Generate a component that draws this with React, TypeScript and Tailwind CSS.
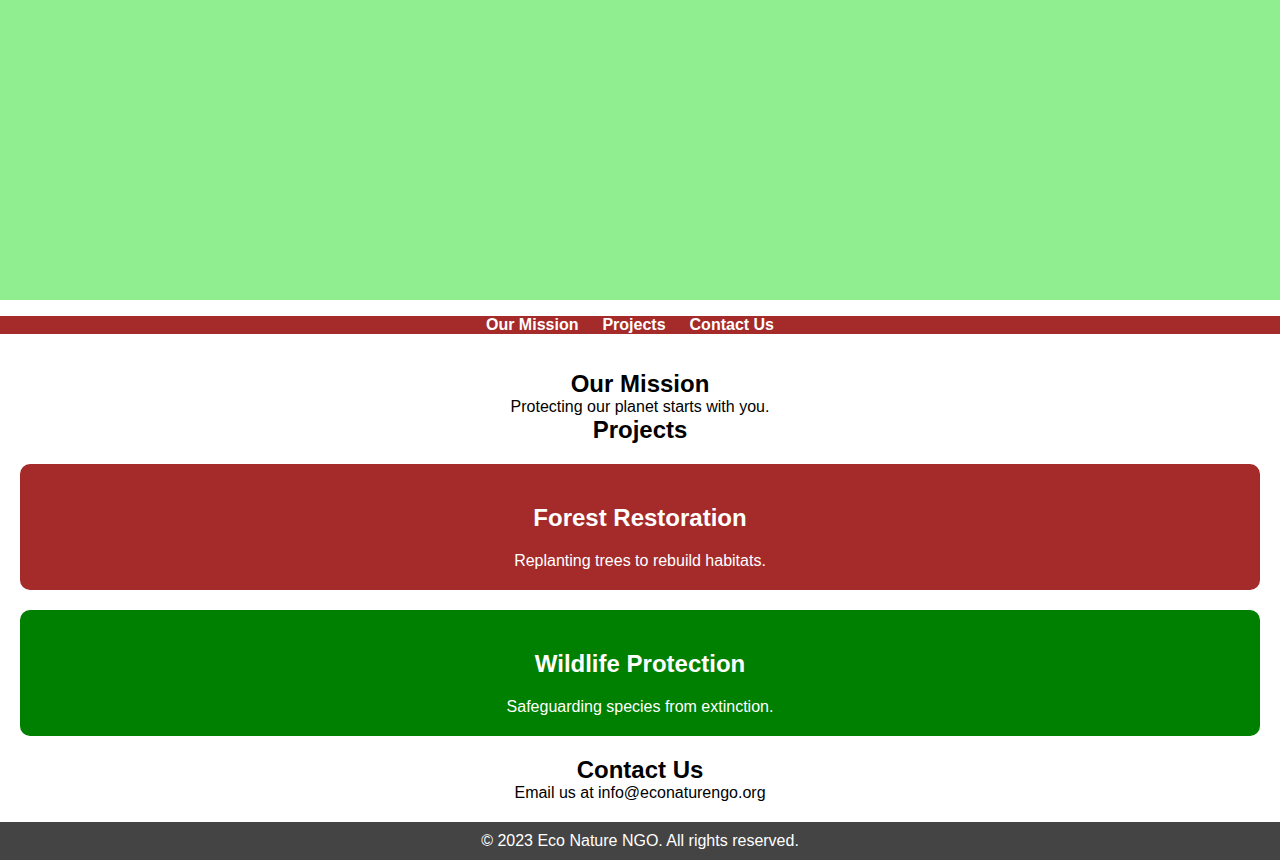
export default function App() {
  return (
    <div className="bg-white text-black" style={{ fontFamily: '"Liberation Sans", Arial, sans-serif' }}>
      <header className="h-[300px] bg-[#90ee90]" />
      <nav className="mt-4 flex h-[18px] items-center justify-center gap-6 bg-[#a52a2a] pr-5 text-[16px] font-bold leading-[18px] text-white">
        <a href="#mission">Our Mission</a>
        <a href="#projects">Projects</a>
        <a href="#contact">Contact Us</a>
      </nav>
      <main className="pt-[36px] text-center">
        <section id="mission">
          <h2 className="text-[24px] font-bold leading-[28px]">Our Mission</h2>
          <p className="text-[16px] leading-[18px]">Protecting our planet starts with you.</p>
        </section>
        <section id="projects">
          <h2 className="text-[24px] font-bold leading-[28px]">Projects</h2>
          <div className="mt-5 flex flex-col gap-5 px-5">
            <div className="rounded-[10px] bg-[#a52a2a] p-5 text-white">
              <h3 className="my-5 text-[24px] font-bold leading-[28px]">Forest Restoration</h3>
              <p className="text-[16px] leading-[18px]">Replanting trees to rebuild habitats.</p>
            </div>
            <div className="rounded-[10px] bg-[#008000] p-5 text-white">
              <h3 className="my-5 text-[24px] font-bold leading-[28px]">Wildlife Protection</h3>
              <p className="text-[16px] leading-[18px]">Safeguarding species from extinction.</p>
            </div>
          </div>
        </section>
        <section id="contact" className="mt-5">
          <h2 className="text-[24px] font-bold leading-[28px]">Contact Us</h2>
          <p className="text-[16px] leading-[18px]">Email us at info@econaturengo.org</p>
        </section>
      </main>
      <footer className="mt-5 bg-[#444444] py-[10px] text-center text-[16px] leading-[18px] text-white">
        © 2023 Eco Nature NGO. All rights reserved.
      </footer>
    </div>
  );
}
